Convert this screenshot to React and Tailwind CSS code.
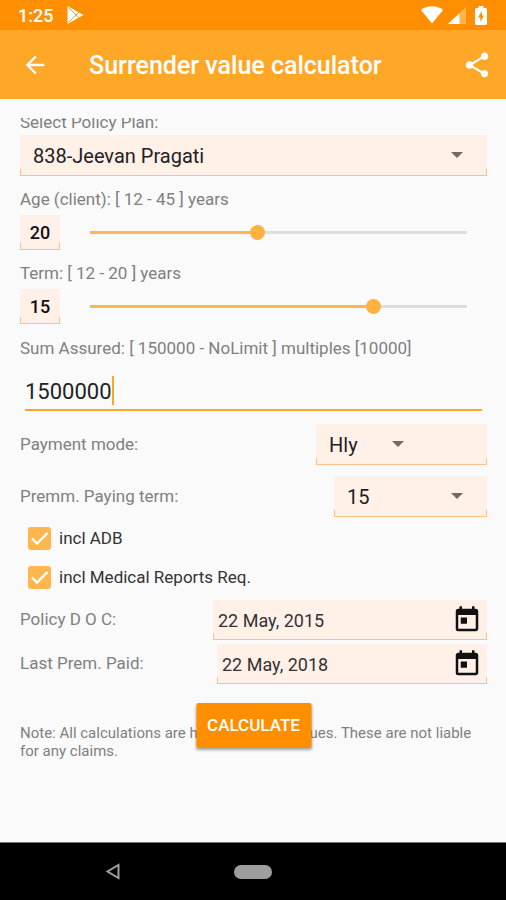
import React, { useState } from 'react';
import { MdArrowBack, MdShare, MdToday } from 'react-icons/md';

// Thin bracket drawn along the bottom of every filled field
const FieldEdge = () => (
  <span className="pointer-events-none absolute inset-x-0 bottom-0 h-[7px] border-x border-b border-[#fdbf8c]" />
);

const StatusBar = () => (
  <div className="flex h-[30px] items-center justify-between bg-[#ff8f00] pl-[18px] pr-[19px] text-white">
    <div className="flex items-center gap-[14px]">
      <span className="text-[18px] font-medium">1:25</span>
      <svg viewBox="0 0 17 18" className="h-[18px] w-[17px]">
        <path d="M0.5 1 Q0.5 0 1.5 0.5 L11.5 6.2 L16.5 9 L11.5 11.8 L1.5 17.5 Q0.5 18 0.5 17 Z" fill="#fff" />
        <path d="M1.5 1.5 L9 9 L1.5 16.5 M12 6 L9 9 L12 12" fill="none" stroke="#ff9f28" strokeWidth="1" />
      </svg>
    </div>
    <div className="flex items-center gap-[5px]">
      <svg viewBox="0 0 22 18" className="h-[18px] w-[22px]" fill="#fff">
        <path d="M11 17.5 L0 4 C3 1.5 7 0.3 11 0.3 S19 1.5 22 4 Z" />
      </svg>
      <svg viewBox="0 0 18 17" className="h-[17px] w-[18px]">
        <path d="M18 0 V17 H0 Z" fill="#ffb54c" />
        <path d="M11.5 6.2 V17 H0 Z" fill="#fff" />
      </svg>
      <svg viewBox="0 0 12 19" className="ml-1 h-[19px] w-[12px]">
        <path d="M3.5 0 H8.5 V2 H10.5 Q12 2 12 3.5 V17.5 Q12 19 10.5 19 H1.5 Q0 19 0 17.5 V3.5 Q0 2 1.5 2 H3.5 Z" fill="#fff" />
        <path d="M7 5 L3 11.5 H5.3 V16 L9 9.5 H7 Z" fill="#ff8f00" />
      </svg>
    </div>
  </div>
);

const AppBar = () => (
  <header className="flex h-[69px] items-center bg-[#ffa726] pl-[21px] pr-[14px] text-white">
    <button type="button" aria-label="Back">
      <MdArrowBack className="size-7" />
    </button>
    <h1 className="ml-10 flex-1 pt-[2px] text-[25px] font-medium">Surrender value calculator</h1>
    <button type="button" aria-label="Share">
      <MdShare className="size-[30px]" />
    </button>
  </header>
);

const Select = ({ id, value, onChange, options, className, arrowClass }) => (
  <div className={`relative bg-[#fff0e8] ${className}`}>
    <select
      id={id}
      value={value}
      onChange={onChange}
      className="block h-[41px] w-full appearance-none bg-transparent pl-[13px] text-[20px] text-[#222] focus:outline-none"
    >
      {options.map((option) => (
        <option key={option}>{option}</option>
      ))}
    </select>
    <svg viewBox="0 0 12 6" className={`pointer-events-none absolute top-[17px] h-[6px] w-[12px] ${arrowClass}`}>
      <path d="M0 0 H12 L6 6 Z" fill="#75695f" />
    </svg>
    <FieldEdge />
  </div>
);

const SliderRow = ({ id, label, value, max, onChange }) => {
  const percent = (value / max) * 100;

  return (
    <div>
      <label htmlFor={id} className="block pt-[11px] leading-6">{label}</label>
      <div className="mt-1 flex items-center gap-[22px] pr-3">
        <output htmlFor={id} className="relative flex h-[35px] w-10 items-center justify-center bg-[#fff0e8] text-[18px] font-medium text-[#111]">
          {value}
          <FieldEdge />
        </output>
        <input
          type="range"
          id={id}
          min="0"
          max={max}
          value={value}
          onChange={onChange}
          style={{ backgroundImage: `linear-gradient(to right, #ffb74d ${percent}%, #dedede ${percent}%)` }}
          className="h-4 min-w-0 flex-1 appearance-none bg-transparent bg-[length:calc(100%-16px)_3px] bg-center bg-no-repeat focus:outline-none [&::-webkit-slider-thumb]:size-[15px] [&::-webkit-slider-thumb]:appearance-none [&::-webkit-slider-thumb]:rounded-full [&::-webkit-slider-thumb]:bg-[#ffb23f]"
        />
      </div>
    </div>
  );
};

const CheckRow = ({ id, label, checked, onChange }) => (
  <div className="flex h-[39px] items-center gap-2 pl-2">
    <span className="relative size-[23px]">
      <input
        type="checkbox"
        id={id}
        checked={checked}
        onChange={onChange}
        className="block size-[23px] appearance-none rounded-[3px] border-2 border-[#ffb74d] checked:bg-[#ffb74d]"
      />
      {checked && (
        <svg viewBox="0 0 23 23" className="pointer-events-none absolute inset-0" fill="none" stroke="#fff" strokeWidth="2.4">
          <path d="M4 11.5 L9 16.5 L19.5 6" />
        </svg>
      )}
    </span>
    <label htmlFor={id} className="text-[#333]">{label}</label>
  </div>
);

const DateRow = ({ id, label, value, onChange, width }) => (
  <div className="flex items-center justify-between">
    <label htmlFor={id}>{label}</label>
    <div className={`relative flex h-10 items-center bg-[#fff0e8] px-[5px] ${width}`}>
      <input
        type="text"
        id={id}
        value={value}
        onChange={onChange}
        className="min-w-0 flex-1 bg-transparent text-[18px] text-[#333] focus:outline-none"
      />
      <button type="button" aria-label={`Pick ${label}`} className="text-[#111]">
        <MdToday className="size-[30px]" />
      </button>
      <FieldEdge />
    </div>
  </div>
);

const NavBar = () => (
  <nav className="grid h-[58px] grid-cols-[1fr_38px_1fr] items-center border-t border-[#777] bg-black">
    <button type="button" aria-label="Back" className="ml-[105px] justify-self-start">
      <svg viewBox="0 0 15 17" className="h-[17px] w-[15px]" fill="none" stroke="#9e9e9e" strokeWidth="2">
        <path d="M13.5 2 V15 L2.5 8.5 Z" />
      </svg>
    </button>
    <button type="button" aria-label="Home" className="h-[14px] rounded-full bg-[#9e9e9e]" />
  </nav>
);

const App = () => {
  const [form, setForm] = useState({
    plan: '838-Jeevan Pragati',
    age: 20,
    term: 15,
    sum: '1500000',
    mode: 'Hly',
    ppt: '15',
    adb: true,
    medical: true,
    doc: '22 May, 2015',
    lastPaid: '22 May, 2018'
  });

  const update = (name) => (e) => {
    const { type, checked, value } = e.target;
    setForm({ ...form, [name]: type === 'checkbox' ? checked : value });
  };

  return (
    <div className="flex min-h-screen flex-col bg-[#fafafa] font-['Roboto',sans-serif] text-[17px] text-[#808080]">
      <StatusBar />
      <AppBar />

      <main className="flex-1 pt-[19px] pr-[19px] pl-5">
        <form className="overflow-hidden" onSubmit={(e) => e.preventDefault()}>
          <label htmlFor="plan" className="-mt-2 block leading-6">Select Policy Plan:</label>
          <Select
            id="plan"
            value={form.plan}
            onChange={update('plan')}
            options={['838-Jeevan Pragati']}
            className="mt-[1px]"
            arrowClass="right-6"
          />

          <SliderRow id="age" label="Age (client): [ 12 - 45 ] years" value={form.age} max={45} onChange={update('age')} />
          <SliderRow id="term" label="Term: [ 12 - 20 ] years" value={form.term} max={20} onChange={update('term')} />

          <label htmlFor="sum" className="block pt-3 leading-6">
            Sum Assured: [ 150000 - NoLimit ] multiples [10000]
          </label>
          <div className="mx-[5px] mt-4 flex h-[35px] items-start border-b-2 border-[#ffa726]">
            <input
              type="text"
              id="sum"
              inputMode="numeric"
              value={form.sum}
              onChange={update('sum')}
              className="h-[30px] bg-transparent text-[22px] text-[#222] caret-transparent [field-sizing:content] focus:outline-none"
            />
            <span className="h-[29px] w-[2px] bg-[#ffa726]" />
          </div>

          <div className="mt-[13px] flex items-center justify-between">
            <label htmlFor="mode">Payment mode:</label>
            <Select
              id="mode"
              value={form.mode}
              onChange={update('mode')}
              options={['Hly', 'Yly', 'Qly', 'Mly']}
              className="w-[171px]"
              arrowClass="right-[83px]"
            />
          </div>
          <div className="mt-[11px] flex items-center justify-between">
            <label htmlFor="ppt">Premm. Paying term:</label>
            <Select
              id="ppt"
              value={form.ppt}
              onChange={update('ppt')}
              options={['15']}
              className="w-[153px]"
              arrowClass="right-6"
            />
          </div>

          <div className="mt-[2px]">
            <CheckRow id="adb" label="incl ADB" checked={form.adb} onChange={update('adb')} />
            <CheckRow id="medical" label="incl Medical Reports Req." checked={form.medical} onChange={update('medical')} />
          </div>

          <div className="mt-[3px] flex flex-col gap-1">
            <DateRow id="doc" label="Policy D O C:" value={form.doc} onChange={update('doc')} width="w-[274px]" />
            <DateRow id="lastPaid" label="Last Prem. Paid:" value={form.lastPaid} onChange={update('lastPaid')} width="w-[270px]" />
          </div>

          {/* The button floats over the note */}
          <div className="relative pt-10 pb-6">
            <p className="text-[15px] leading-[18px]">
              Note: All calculations are having approx. values. These are not liable for any claims.
            </p>
            <button
              type="submit"
              className="absolute top-[19px] left-1/2 h-[45px] w-[115px] -translate-x-1/2 rounded-[2px] bg-[#ff8f00] text-[17px] font-medium text-white shadow-[0_2px_3px_rgba(0,0,0,0.35)]"
            >
              CALCULATE
            </button>
          </div>
        </form>
      </main>

      <NavBar />
    </div>
  );
};

export default App;
